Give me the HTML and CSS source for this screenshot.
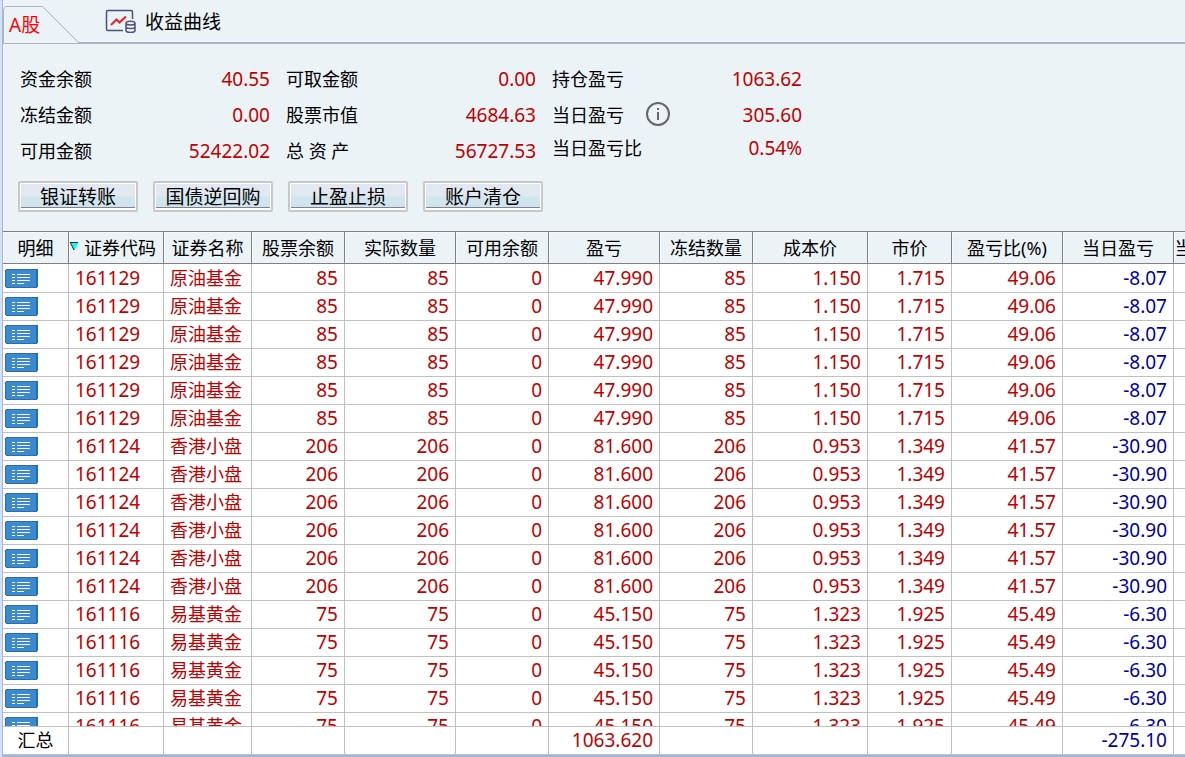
FILE: index.html
```html
<!DOCTYPE html>
<html lang="zh-CN">
<head>
<meta charset="utf-8">
<title>A股持仓</title>
<link rel="stylesheet" href="styles.css">
</head>
<body>
<main class="panel">
  <nav class="tabs">
    <a class="tab-active" href="#stock">
      <svg class="tab-shape" viewBox="0 0 78 38" aria-hidden="true"><path d="M.5 37.5V3.5L2.5.5H39.5L76.5 37.5" /><path d="M0 37.5H76"/></svg>
      <span class="tab-text">A股</span>
    </a>
    <a class="tab-link" href="#curve">
      <svg class="chart-icon" viewBox="0 0 32 24" aria-hidden="true">
        <path class="frame" d="M18 21.5H3Q1.5 21.5 1.5 20V3Q1.5 1.500 3 1.5H26Q27.5 1.5 27.5 3V10"/>
        <path class="trend" d="M6 16L11.500 10.500L14.500 13.500L21 7.500"/>
        <path class="coins" d="M21 14V21.5C21 24 30 24 30 21.5V14M21 14C21 11.5 30 11.5 30 14C30 16.500 21 16.500 21 14M21 18C21 20 30 20 30 18"/>
      </svg>
      收益曲线
    </a>
  </nav>
  <section class="summary">
    <dl class="group">
      <div class="item"><dt>资金余额</dt><dd>40.55</dd></div>
      <div class="item"><dt>冻结金额</dt><dd>0.00</dd></div>
      <div class="item"><dt>可用金额</dt><dd>52422.02</dd></div>
    </dl>
    <dl class="group">
      <div class="item"><dt>可取金额</dt><dd>0.00</dd></div>
      <div class="item"><dt>股票市值</dt><dd>4684.63</dd></div>
      <div class="item"><dt>总 资 产</dt><dd>56727.53</dd></div>
    </dl>
    <dl class="group">
      <div class="item"><dt>持仓盈亏</dt><dd>1063.62</dd></div>
      <div class="item"><dt>当日盈亏
        <svg class="info-icon" viewBox="0 0 24 24" role="img" aria-label="说明"><circle cx="12" cy="12" r="11"/><path d="M12 10V18M12 6V8"/></svg></dt><dd>305.60</dd></div>
      <div class="item item-short"><dt>当日盈亏比</dt><dd>0.54%</dd></div>
    </dl>
  </section>
  <div class="actions">
    <button class="action" type="button">银证转账</button>
    <button class="action" type="button">国债逆回购</button>
    <button class="action" type="button">止盈止损</button>
    <button class="action" type="button">账户清仓</button>
  </div>
  <div class="scroll">
    <table class="grid">
      <colgroup><col class="w66"><col class="w95"><col class="w88"><col class="w93"><col class="w111"><col class="w93"><col class="w111"><col class="w93"><col class="w115"><col class="w84"><col class="w111"><col class="w111"><col class="w92"></colgroup>
      <thead>
        <tr><th>明细</th><th class="sorted"><svg class="sort-icon" viewBox="0 0 9 9" aria-hidden="true"><path class="sort-fill" d="M1 1H8L5 8H4Z"/><path class="sort-edge" d="M0 .5H8M.5 1L4 8"/></svg>证券代码</th><th>证券名称</th><th>股票余额</th><th>实际数量</th><th>可用余额</th><th>盈亏</th><th>冻结数量</th><th>成本价</th><th>市价</th><th>盈亏比(%)</th><th>当日盈亏</th><th>当日盈亏比</th></tr>
      </thead>
      <tbody id="positions"></tbody>
    </table>
  </div>
  <div class="total">
    <table class="grid">
      <colgroup><col class="w66"><col class="w95"><col class="w88"><col class="w93"><col class="w111"><col class="w93"><col class="w111"><col class="w93"><col class="w115"><col class="w84"><col class="w111"><col class="w111"><col class="w92"></colgroup>
      <tbody>
        <tr><th scope="row">汇总</th><td></td><td></td><td></td><td></td><td></td><td>1063.620</td><td></td><td></td><td></td><td></td><td class="down">-275.10</td><td></td></tr>
      </tbody>
    </table>
  </div>
</main>
<script src="app.js"></script>
</body>
</html>
```
FILE: styles.css
```css
* { box-sizing: border-box; }
body {
  margin: 0;
  background: #ebf3f6;
  color: #000;
  font-family: "Noto Sans", "Noto Sans CJK SC", sans-serif;
  font-size: 18px;
}
.panel {
  display: flex;
  flex-direction: column;
  height: 100vh;
  overflow: hidden;
  margin-left: 2px;
  border-left: 1px solid #a9b6cb;
  border-bottom: 2px solid #a0b4dc;
  box-shadow: -2px 0 #d3e2fb;
}
.tabs {
  display: flex;
  flex: none;
  height: 44px;
  padding-top: 6px;
  background: linear-gradient(#a9b6c7, #a9b6c7) 76px 42px / 100% 2px no-repeat;
}
.tabs a { color: #000; font-size: 19px; text-decoration: none; }
.tabs .tab-active {
  display: grid;
  width: 78px;
  height: 38px;
  color: #f00;
}
.tab-shape, .tab-text { grid-area: 1 / 1; }
.tab-shape { width: 78px; height: 38px; fill: none; stroke: #a9b6c7; }
.tab-text { padding-left: 6px; line-height: 38px; }
.tab-link {
  display: flex;
  align-items: center;
  gap: 8px;
  height: 30px;
  margin-left: 24px;
}
.chart-icon { width: 32px; height: 24px; fill: none; stroke: #4d5078; stroke-width: 1.5; }
.chart-icon .trend { stroke: #e02828; stroke-width: 2; }
.summary {
  display: flex;
  flex: none;
  gap: 16px;
  padding: 17px 17px 0;
}
.group { flex: 0 0 250px; margin: 0; }
.item {
  display: flex;
  align-items: center;
  justify-content: space-between;
  height: 36px;
}
.item-short { height: 30px; }
.item dt { display: flex; align-items: center; gap: 22px; padding-bottom: 2px; }
.item dd { margin: 0; color: #c00000; font-size: 19px; }
.info-icon { width: 24px; height: 24px; fill: none; stroke: #666; stroke-width: 2; }
.actions {
  display: flex;
  flex: none;
  gap: 15px;
  padding: 12px 15px 19px;
}
.action {
  width: 120px;
  height: 31px;
  padding: 2px 0 0;
  border: 2px solid #c8c8c8;
  border-radius: 2px;
  background: linear-gradient(#e2e8f1 0 48%, #cfe6ee 52%, #d2e2ee);
  box-shadow: inset 0 0 0 1px #fff, inset 0 -2px #fff, inset 0 -3px #808488;
  color: #000;
  font-family: inherit;
  font-size: 19px;
  line-height: 25px;
}
.scroll { flex: 1 1 0; min-height: 0; overflow: hidden; background: #fff; }
.total { flex: none; overflow: hidden; border-top: 1px solid #c0c0c0; background: #fff; }
.grid {
  width: 1263px;
  table-layout: fixed;
  border-collapse: separate;
  border-spacing: 0;
}
.w66 { width: 66px; } .w84 { width: 84px; } .w88 { width: 88px; }
.w92 { width: 92px; } .w93 { width: 93px; } .w95 { width: 95px; }
.w111 { width: 111px; } .w115 { width: 115px; }
.grid th { padding: 0; font-weight: 400; white-space: nowrap; }
.grid thead th {
  height: 33px;
  padding-top: 2px;
  border: solid #808080;
  border-width: 1px 1px 1px 0;
  background: #ebf3f6;
  box-shadow: inset 1px 1px #f8fbfc;
  line-height: 29px;
}
.grid .sorted { padding-left: 1px; text-align: left; }
.sort-icon { width: 9px; height: 9px; margin-right: 5px; vertical-align: 4px; }
.sort-fill { fill: #0ff; }
.sort-edge { fill: none; stroke: #222; }
.grid td, .total th {
  height: 28px;
  padding: 0 6px;
  border: solid #c0c0c0;
  border-width: 0 1px 1px 0;
  color: #c00000;
  font-size: 19px;
  line-height: 27px;
  text-align: right;
  white-space: nowrap;
}
.grid .code, .grid .name { text-align: left; }
.grid .name { font-size: 18px; }
.grid .down { color: #0000a8; }
.grid .detail { padding: 0 0 0 2px; }
#positions tr:first-child td { height: 29px; padding-top: 1px; }
.detail-button { display: block; padding: 0; border: 0; background: none; }
.detail-button svg { display: block; width: 33px; height: 19px; }
.total th { padding: 0; color: #000; font-size: 18px; text-align: center; }
```
FILE: app.js
```javascript
const funds = [
  { count: 6, code: "161129", name: "原油基金", values: ["85", "85", "0", "47.990", "85", "1.150", "1.715", "49.06", "-8.07"] },
  { count: 6, code: "161124", name: "香港小盘", values: ["206", "206", "0", "81.600", "206", "0.953", "1.349", "41.57", "-30.90"] },
  { count: 5, code: "161116", name: "易基黄金", values: ["75", "75", "0", "45.150", "75", "1.323", "1.925", "45.49", "-6.30"] }
];
const detailIcon = '<svg viewBox="0 0 33 19" aria-hidden="true"><path d="M1 0H33V18H32V19H1V18H0V1H1Z" fill="#2e6da4"/><rect x="1" y="1" width="30" height="17" fill="#3a8ad2"/><path d="M7 5.5H10M7 8.5H10M7 11.5H10M7 14.5H10M12 5.5H25M12 8.5H25M12 11.5H25M12 14.5H19" stroke="#fff"/></svg>';
const rows = [];
for (const fund of funds) {
  const cells = fund.values.map(v => `<td${v.startsWith("-") ? ' class="down"' : ""}>${v}</td>`).join("");
  const row = `<tr><td class="detail"><button class="detail-button" type="button" aria-label="明细">${detailIcon}</button></td><td class="code">${fund.code}</td><td class="name">${fund.name}</td>${cells}<td></td></tr>`;
  for (let i = 0; i < fund.count; i++) rows.push(row);
}
document.getElementById("positions").innerHTML = rows.join("");
```
